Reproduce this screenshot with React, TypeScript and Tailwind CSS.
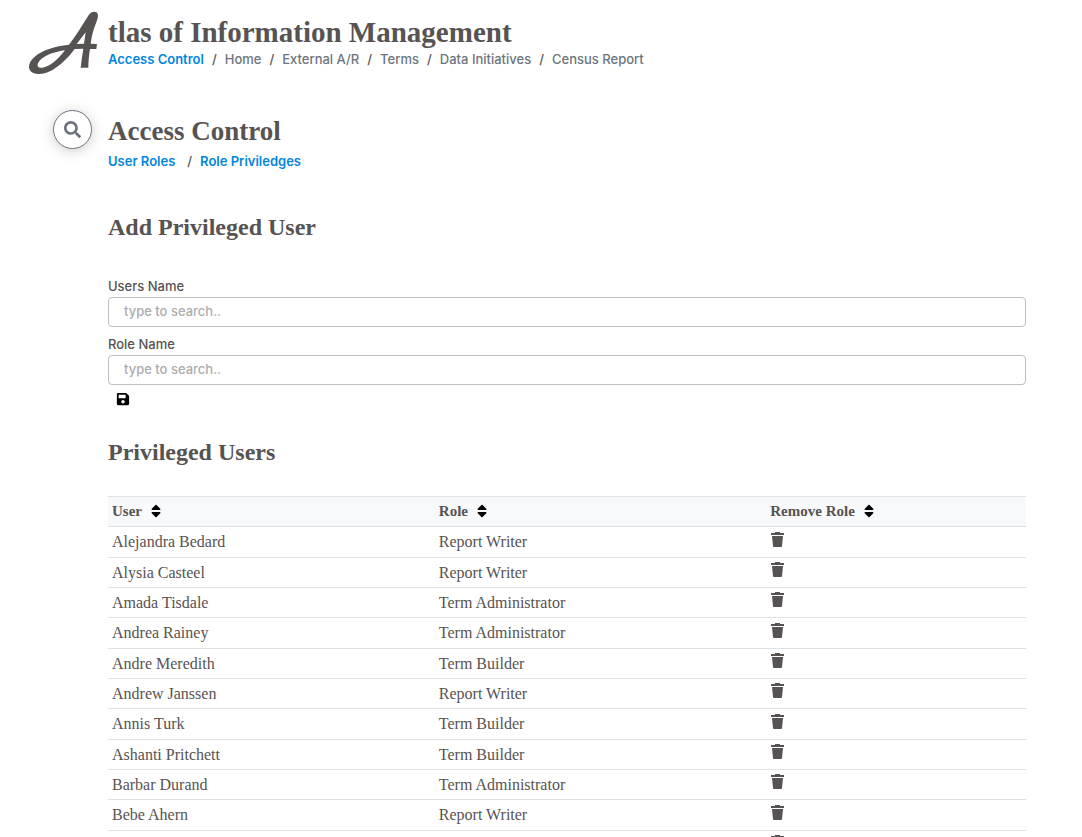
import React from "react";
import { FaSave, FaSearch, FaSort } from "react-icons/fa";

const navLinks = ["Access Control", "Home", "External A/R", "Terms", "Data Initiatives", "Census Report"];

const users = [
  ["Alejandra Bedard", "Report Writer"],
  ["Alysia Casteel", "Report Writer"],
  ["Amada Tisdale", "Term Administrator"],
  ["Andrea Rainey", "Term Administrator"],
  ["Andre Meredith", "Term Builder"],
  ["Andrew Janssen", "Report Writer"],
  ["Annis Turk", "Term Builder"],
  ["Ashanti Pritchett", "Term Builder"],
  ["Barbar Durand", "Term Administrator"],
  ["Bebe Ahern", "Report Writer"],
  ["Bertha Colon", "Report Writer"],
];

const headingFont = "font-['Liberation_Serif',serif] font-bold";

function Logo() {
  return (
    <svg viewBox="0 0 270 225" className="h-[75px] w-[90px]" aria-hidden="true">
      <path
        d="M203 35 C210 22 220 18 229 22 C236 26 235 38 229 52 C221 72 215 91 212 116 L231 117 L229 132 L210 132 C207 150 205 169 205 188 L182 188 C184 169 187 150 190 131 L164 132 C146 157 121 181 99 194 C72 210 39 212 29 195 C20 174 43 150 76 136 C100 126 126 121 147 119 C168 91 186 62 203 35 Z M197 82 L170 117 L192 116 Z M135 136 C105 140 74 150 58 168 C48 182 53 190 68 188 C92 184 116 161 135 136 Z"
        fill="#575352"
        fillRule="evenodd"
      />
    </svg>
  );
}

function Trash() {
  return (
    <svg viewBox="0 0 13 15" className="h-[15px] w-[13px]" fill="#575352" aria-hidden="true">
      <path d="M0 1h4V0h5v1h4v2H0z" />
      <path d="M1 4h11l-1 10q0 1-1 1H3q-1 0-1-1z" />
    </svg>
  );
}

function SearchField({ id, label }: { id: string; label: string }) {
  return (
    <div className="mb-2 flex flex-col">
      <label htmlFor={id} className="pb-[2px] text-[13px] leading-[18px]">{label}</label>
      <input
        id={id}
        type="text"
        placeholder="type to search.."
        className="h-[30px] w-full rounded border border-[#bfbfbf] bg-white px-[15px] pb-[2px] text-[13px] placeholder:text-[#adadad]"
      />
    </div>
  );
}

export default function App() {
  return (
    <div className="min-h-screen bg-white font-['Inter',sans-serif] font-medium text-[#575352]">
      <header className="flex pl-5 pt-[5px]">
        <Logo />
        <div className="-ml-[2px] pt-[10px]">
          <h1 className={`${headingFont} text-[29px] leading-[34px]`}>tlas of Information Management</h1>
          <nav className="flex text-[13px] leading-5">
            {navLinks.map((name, i) => (
              <React.Fragment key={name}>
                {i > 0 && <span className="px-2">/</span>}
                <a href="#" className={i === 0 ? "font-semibold text-[#0086dd]" : "text-[#6c757d]"}>{name}</a>
              </React.Fragment>
            ))}
          </nav>
        </div>
      </header>

      <div className="flex pr-14 pt-[30px]">
        <div className="w-[108px] shrink-0 pl-[53px]">
          <button
            aria-label="Search"
            className="flex size-[39px] items-center justify-center rounded-full border border-[#6c757d] bg-white text-[17px] text-[#6c757d] shadow-[0_2px_14px_rgba(0,0,0,0.2)]"
          >
            <FaSearch />
          </button>
        </div>

        <main className="min-w-0 grow">
          <h2 className={`${headingFont} pt-[3px] text-[27px] leading-9`}>Access Control</h2>
          <nav className="flex pt-[2px] text-[13px] font-semibold leading-5 text-[#0086dd]">
            <a href="#">User Roles</a>
            <span className="pl-3 pr-2 font-medium text-[#575352]">/</span>
            <a href="#">Role Priviledges</a>
          </nav>

          <h3 className={`${headingFont} pt-10 text-2xl leading-8`}>Add Privileged User</h3>
          <form className="pt-[34px]">
            <SearchField id="user-name" label="Users Name" />
            <SearchField id="role-name" label="Role Name" />
            <button type="button" aria-label="Save" className="-mt-px ml-2 block text-sm text-black">
              <FaSave />
            </button>
          </form>

          <h3 className={`${headingFont} pt-[30px] text-2xl leading-8`}>Privileged Users</h3>
          <table className="mt-7 w-full table-fixed border-collapse font-['Liberation_Serif',serif] text-base leading-5">
            <thead>
              <tr className="h-[30px] border-y border-[#dee2e6] bg-[#f8f9fb] text-left">
                {["User", "Role", "Remove Role"].map((name) => (
                  <th key={name} className="px-1 pb-[2px] pt-0 text-[15px] font-bold first:w-[35.6%] last:w-[28.3%]">
                    <button className="flex items-center gap-[6px]">
                      {name}
                      <FaSort className="text-base text-black" aria-hidden="true" />
                    </button>
                  </th>
                ))}
              </tr>
            </thead>
            <tbody>
              {users.map(([name, role]) => (
                <tr key={name} className="h-[30px] border-b border-[#dee2e6] nth-[3n+1]:h-[31px]">
                  <td className="px-1 py-0 font-normal">{name}</td>
                  <td className="px-1 py-0 font-normal">{role}</td>
                  <td className="px-[5px] pb-[6px] pt-0">
                    <button aria-label={`Remove role from ${name}`} className="block">
                      <Trash />
                    </button>
                  </td>
                </tr>
              ))}
            </tbody>
          </table>
        </main>
      </div>
    </div>
  );
}
